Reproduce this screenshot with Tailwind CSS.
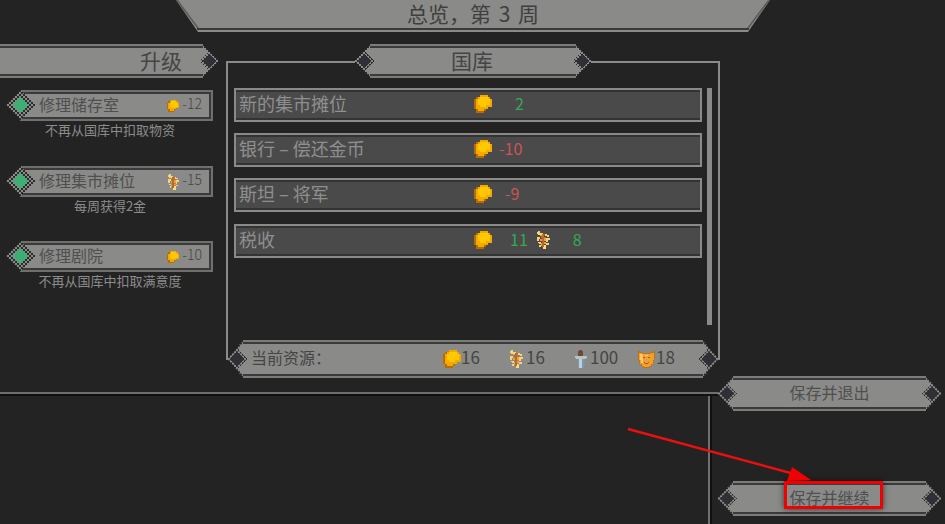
<!DOCTYPE html>
<html lang="zh">
<head>
    <meta charset="UTF-8">
    <meta name="viewport" content="width=device-width, initial-scale=1.0">
    <title>总览</title>
    <script src="https://cdn.jsdelivr.net/npm/@tailwindcss/browser@4"></script>
</head>
<body class="bg-[#232323] w-[945px] h-[524px] overflow-hidden relative flex font-['Noto_Sans_CJK_SC',sans-serif]">
    <!-- shared pixel art -->
    <svg class="absolute w-0 h-0" aria-hidden="true">
        <defs>
            <pattern id="checker" width="4" height="4" patternUnits="userSpaceOnUse">
                <rect width="4" height="4" fill="#2b2b2b"/>
                <rect width="2" height="2" fill="#8a8a88"/>
                <rect x="2" y="2" width="2" height="2" fill="#8a8a88"/>
            </pattern>
            <symbol id="coin" viewBox="0 0 9 9" shape-rendering="crispEdges">
                <path fill="#b56c00" d="M3 0h4v1h1v1h1v4h-2v1h-1v1h-1v1h-4v-2h-1v-5h1v-1h2z"/>
                <path fill="#f5a800" d="M3 0h4v1h1v1h1v4h-2v1h-2v1h-3v-1h-1v-5h1v-1h1z"/>
                <path fill="#ffc800" d="M3 1h4v1h1v3h-2v1h-3v-1h-1v-3h1z"/>
            </symbol>
            <symbol id="wheat" viewBox="0 0 13 18" shape-rendering="crispEdges">
                <path fill="#f8d27a" d="M1 0h2v2h3v1h-1v1h-4v-1h-1v-2h1zM8 3h2v1h2v2h-2v-1h-2zM0 6h3v2h-1v2h-2zM9 7h4v2h-2v2h-2zM1 11h3v2h-2v-1h-1zM9 12h3v2h-3zM2 14h2v2h-2z"/>
                <path fill="#b9692a" d="M5 3h3v1h-1v2h2v1h-2v9h-2v-6h-2v-1h2v-2h-1v-2h1z"/>
                <path fill="#f0a030" d="M7 7h2v3h-2zM3 8h2v2h-2zM4 12h1v3h-1zM7 11h2v2h-2zM3 4h2v1h-2z"/>
                <path fill="#ffd97a" d="M7 14h2v4h-3v-2h1z"/>
            </symbol>
            <symbol id="torch" viewBox="0 0 12 18" shape-rendering="crispEdges">
                <path fill="#6e4a3a" d="M4 0h3v1h1v5h-5v-5h1z"/>
                <path fill="#b9c4c6" d="M0 6h12v2h-1v1h-10v-1h-1z"/>
                <path fill="#7f98a6" d="M3 9h6v9h-6z"/>
                <path fill="#bcd0d8" d="M4 9h3v9h-3z"/>
            </symbol>
            <symbol id="mask" viewBox="0 0 17 17" shape-rendering="crispEdges">
                <path fill="#c2720f" d="M0 0h2v1h2v1h9v-1h2v-1h2v9h-1v4h-2v2h-2v2h-7v-2h-2v-2h-2v-4h-1z"/>
                <path fill="#f0a030" d="M1 2h3v1h9v-1h3v7h-1v4h-2v2h-2v1h-5v-1h-2v-2h-2v-4h-1z"/>
                <path fill="#ffc860" d="M2 3h3v9h-2v-3h-1zM7 4h3v1h-3z"/>
                <path fill="#a85a12" d="M5 6h2v1h-2zM10 6h2v1h-2zM6 11h1v1h3v-1h1v1h-1v1h-3v-1h-1z"/>
            </symbol>
            <!-- banner end: chamfer and dark diamond -->
            <symbol id="cap" viewBox="0 0 22 34" preserveAspectRatio="none" shape-rendering="crispEdges">
                <polygon points="15,0 22,0 22,34 15,34 0,17" fill="url(#checker)"/>
                <polygon points="15,3 22,3 22,31 15,31 2,17" fill="#8a8a88"/>
                <rect x="15" y="0" width="7" height="2" fill="#7c7c7a"/>
                <rect x="15" y="2" width="7" height="2" fill="#3a3a3a"/>
                <rect x="15" y="30" width="7" height="2" fill="#3a3a3a"/>
                <rect x="15" y="32" width="7" height="2" fill="#7c7c7a"/>
                <polygon points="9,7 19,17 9,27 -1,17" fill="url(#checker)"/>
                <polygon points="9,10 16,17 9,24 2,17" fill="#2f3036"/>
            </symbol>
            <symbol id="gem" viewBox="0 0 30 30" shape-rendering="crispEdges">
                <polygon points="15,0 30,15 15,30 0,15" fill="url(#checker)"/>
                <polygon points="15,7 23,15 15,23 7,15" fill="#3fae74"/>
            </symbol>
        </defs>
    </svg>

    <!-- left part: header, upgrades, treasury, bottom area -->
    <div class="w-[718px] shrink-0 flex flex-col">
        <div class="h-[392px] shrink-0 flex flex-col">
            <header class="ml-[176px] w-[594px] h-[32px] shrink-0 relative flex justify-center pt-[2px] text-[21px] leading-[22px] text-[#3f3f3f] [word-spacing:3px]">
                <svg class="absolute inset-0" width="594" height="32" viewBox="0 0 594 32" aria-hidden="true">
                    <polygon points="0,0 594,0 572,32 22,32" fill="#8a8a88"/>
                    <rect x="21" y="28" width="552" height="2" fill="#3a3a3a"/>
                    <polygon points="0,0 2,0 23,28 21,28" fill="#5c5c5a"/>
                    <polygon points="594,0 592,0 571,28 573,28" fill="#5c5c5a"/>
                </svg>
                <span class="relative">总览&#xFF0C;第 3 周</span>
            </header>

            <div class="flex mt-[12px]">
                <!-- upgrades -->
                <section class="w-[226px] shrink-0">
                    <div class="w-[218px] h-[34px] flex">
                        <div class="flex-1 border-y-2 border-[#7c7c7a]">
                            <div class="h-full border-y-2 border-[#3a3a3a] bg-[#8a8a88] text-right pr-[14px] text-[21px] leading-[24px] text-[#454545]">升级</div>
                        </div>
                        <svg class="w-[22px] h-[34px] -scale-x-100"><use href="#cap"/></svg>
                    </div>

                    <div class="mt-[12px] ml-[20px] w-[193px] flex flex-col">
                        <div class="relative h-[31px] border-2 border-[#6f6f6d]">
                            <svg class="absolute -left-[17px] -top-[2px] w-[30px] h-[30px]"><use href="#gem"/></svg>
                            <div class="h-full border-2 border-[#3a3a3a] bg-[#8a8a88] flex items-center pl-[15px] pr-[7px] text-[16px] text-[#4f4f4f]">
                                <span class="flex-1 mb-[4px]">修理储存室</span>
                                <svg class="w-[12px] h-[12px]"><use href="#coin"/></svg>
                                <span class="ml-[3px] mb-[4px] text-[14px] font-light text-[#454545]">-12</span>
                            </div>
                        </div>
                        <p class="text-center pr-[13px] whitespace-nowrap text-[13px] leading-[18px] text-[#8c8c8c]">不再从国库中扣取物资</p>

                        <div class="relative h-[31px] border-2 border-[#6f6f6d] mt-[27px]">
                            <svg class="absolute -left-[17px] -top-[2px] w-[30px] h-[30px]"><use href="#gem"/></svg>
                            <div class="h-full border-2 border-[#3a3a3a] bg-[#8a8a88] flex items-center pl-[15px] pr-[7px] text-[16px] text-[#4f4f4f]">
                                <span class="flex-1 mb-[4px]">修理集市摊位</span>
                                <svg class="w-[11px] h-[16px]"><use href="#wheat"/></svg>
                                <span class="ml-[3px] mb-[4px] text-[14px] font-light text-[#454545]">-15</span>
                            </div>
                        </div>
                        <p class="text-center pr-[13px] whitespace-nowrap text-[13px] leading-[18px] text-[#8c8c8c]">每周获得2金</p>

                        <div class="relative h-[31px] border-2 border-[#6f6f6d] mt-[26px]">
                            <svg class="absolute -left-[17px] -top-[2px] w-[30px] h-[30px]"><use href="#gem"/></svg>
                            <div class="h-full border-2 border-[#3a3a3a] bg-[#8a8a88] flex items-center pl-[15px] pr-[7px] text-[16px] text-[#4f4f4f]">
                                <span class="flex-1 mb-[4px]">修理剧院</span>
                                <svg class="w-[12px] h-[12px]"><use href="#coin"/></svg>
                                <span class="ml-[3px] mb-[4px] text-[14px] font-light text-[#454545]">-10</span>
                            </div>
                        </div>
                        <p class="text-center pr-[13px] whitespace-nowrap text-[13px] leading-[18px] text-[#8c8c8c]">不再从国库中扣取满意度</p>
                    </div>
                </section>

                <!-- treasury -->
                <section class="w-[494px] h-[334px] shrink-0 relative">
                    <div class="absolute left-0 right-0 top-[17px] bottom-[18px] border-2 border-[#8a8a88]"></div>
                    <div class="relative mx-auto w-[236px] h-[34px] flex bg-[#232323]">
                        <svg class="w-[22px] h-[34px]"><use href="#cap"/></svg>
                        <div class="flex-1 border-y-2 border-[#7c7c7a]">
                            <div class="h-full border-y-2 border-[#3a3a3a] bg-[#8a8a88] text-center pr-[2px] text-[21px] leading-[24px] text-[#454545]">国库</div>
                        </div>
                        <svg class="w-[22px] h-[34px] -scale-x-100"><use href="#cap"/></svg>
                    </div>

                    <div class="relative flex mt-[10px] pl-[8px] h-[237px]">
                        <div class="w-[468px] flex flex-col gap-[11px] text-[18px]">
                            <div class="h-[34px] border-2 border-[#8a8a88]">
                                <div class="h-full border-y-2 border-[#333] bg-[#4a4a4a] flex items-center pl-[3px] text-[#8f8f8f]">
                                    <span class="w-[235px] shrink-0 mb-[4px]">新的集市摊位</span>
                                    <svg class="w-[18px] h-[18px] mb-[2px]"><use href="#coin"/></svg>
                                    <span class="ml-[23px] mb-[4px] text-[16px] text-[#3aa655]">2</span>
                                </div>
                            </div>
                            <div class="h-[34px] border-2 border-[#8a8a88]">
                                <div class="h-full border-y-2 border-[#333] bg-[#4a4a4a] flex items-center pl-[3px] text-[#8f8f8f]">
                                    <span class="w-[235px] shrink-0 mb-[4px]">银行 – 偿还金币</span>
                                    <svg class="w-[18px] h-[18px] mb-[2px]"><use href="#coin"/></svg>
                                    <span class="ml-[7px] mb-[4px] text-[16px] text-[#c9545a]">-10</span>
                                </div>
                            </div>
                            <div class="h-[34px] border-2 border-[#8a8a88]">
                                <div class="h-full border-y-2 border-[#333] bg-[#4a4a4a] flex items-center pl-[3px] text-[#8f8f8f]">
                                    <span class="w-[235px] shrink-0 mb-[4px]">斯坦 – 将军</span>
                                    <svg class="w-[18px] h-[18px] mb-[2px]"><use href="#coin"/></svg>
                                    <span class="ml-[13px] mb-[4px] text-[16px] text-[#c9545a]">-9</span>
                                </div>
                            </div>
                            <div class="h-[34px] mt-px border-2 border-[#8a8a88]">
                                <div class="h-full border-y-2 border-[#333] bg-[#4a4a4a] flex items-center pl-[3px] text-[#8f8f8f]">
                                    <span class="w-[235px] shrink-0 mb-[4px]">税收</span>
                                    <svg class="w-[18px] h-[18px] mb-[2px]"><use href="#coin"/></svg>
                                    <span class="ml-[18px] mb-[4px] text-[16px] text-[#3aa655]">11</span>
                                    <svg class="ml-[9px] w-[13px] h-[18px] mb-[2px]"><use href="#wheat"/></svg>
                                    <span class="ml-[23px] mb-[4px] text-[16px] text-[#3aa655]">8</span>
                                </div>
                            </div>
                        </div>
                        <div class="ml-[5px] w-[5px] h-[237px] bg-[#8a8a88]"></div>
                    </div>

                    <!-- current resources -->
                    <div class="relative mt-[15px] mx-[2px] h-[38px] flex text-[16px] text-[#454545]">
                        <svg class="w-[22px] h-[38px] shrink-0"><use href="#cap"/></svg>
                        <div class="flex-1 border-y-2 border-[#7c7c7a]">
                            <div class="h-full border-y-2 border-[#3a3a3a] bg-[#8a8a88] flex items-center">
                                <span class="w-[193px] shrink-0 pl-px mb-[5px]">当前资源&#xFF1A;</span>
                                <svg class="w-[18px] h-[18px]"><use href="#coin"/></svg>
                                <span class="w-[49px] shrink-0 mb-[5px] text-[17px]">16</span>
                                <svg class="w-[13px] h-[18px]"><use href="#wheat"/></svg>
                                <span class="ml-[3px] w-[49px] shrink-0 mb-[5px] text-[17px]">16</span>
                                <svg class="w-[12px] h-[18px]"><use href="#torch"/></svg>
                                <span class="ml-[3px] w-[48px] shrink-0 mb-[5px] text-[17px]">100</span>
                                <svg class="w-[17px] h-[17px]"><use href="#mask"/></svg>
                                <span class="ml-px mb-[5px] text-[17px]">18</span>
                            </div>
                        </div>
                        <svg class="w-[22px] h-[38px] shrink-0 -scale-x-100"><use href="#cap"/></svg>
                    </div>
                </section>
            </div>
        </div>

        <!-- bottom area -->
        <div class="flex-1 flex flex-col">
            <div class="h-[2px] bg-[#6f6f6d]"></div>
            <div class="h-[2px] bg-[#111]"></div>
            <div class="flex-1 flex justify-end pr-[6px]">
                <div class="w-[2px] bg-[#6f6f6d]"></div>
                <div class="w-[2px] bg-[#111]"></div>
            </div>
        </div>
    </div>

    <!-- save buttons -->
    <div class="w-[223px] pt-[376px] flex flex-col gap-[70px]">
        <div class="h-[35px] flex text-[16px] text-[#4f4f4f]">
            <svg class="w-[22px] h-[35px] shrink-0"><use href="#cap"/></svg>
            <div class="flex-1 border-y-2 border-[#7c7c7a]">
                <div class="h-full border-y-2 border-[#3a3a3a] bg-[#8a8a88] flex items-center justify-center"><span class="mb-[4px]">保存并退出</span></div>
            </div>
            <svg class="w-[22px] h-[35px] shrink-0 -scale-x-100"><use href="#cap"/></svg>
        </div>
        <div class="h-[35px] flex text-[16px] text-[#4f4f4f]">
            <svg class="w-[22px] h-[35px] shrink-0"><use href="#cap"/></svg>
            <div class="flex-1 border-y-2 border-[#7c7c7a]">
                <div class="h-full border-y-2 border-[#3a3a3a] bg-[#8a8a88] flex items-center justify-center"><span class="mb-[4px]">保存并继续</span></div>
            </div>
            <svg class="w-[22px] h-[35px] shrink-0 -scale-x-100"><use href="#cap"/></svg>
        </div>
    </div>

    <!-- annotation on top of the screenshot -->
    <div class="absolute left-[784px] top-[481px] w-[99px] h-[28px] border-[3px] border-[#f00000] shadow-[0_0_6px_rgba(0,0,0,0.6)]"></div>
    <svg class="absolute left-0 top-0 pointer-events-none" width="945" height="524" aria-hidden="true">
        <line x1="628" y1="429" x2="798" y2="475" stroke="#e81010" stroke-width="2.5"/>
        <polygon points="811,480 787,481 792,467" fill="#f00000"/>
    </svg>
</body>
</html>
